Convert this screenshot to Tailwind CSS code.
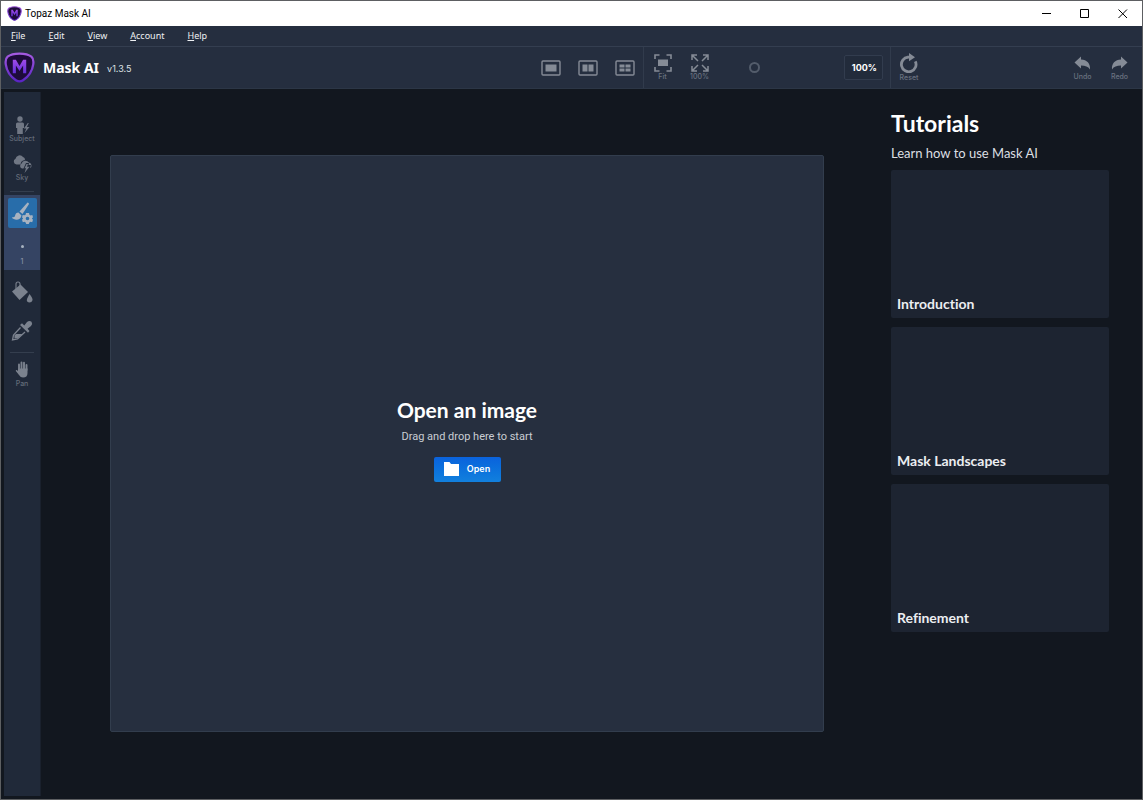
<!DOCTYPE html>
<html lang="en">
<head>
<meta charset="utf-8">
<meta name="viewport" content="width=device-width, initial-scale=1">
<title>Topaz Mask AI</title>
<script src="https://cdn.jsdelivr.net/npm/@tailwindcss/browser@4"></script>
</head>
<body class="flex h-screen flex-col overflow-hidden border border-[#5d5f62] bg-[#12171f] font-['Lato','Liberation_Sans',sans-serif] text-white">
<svg class="absolute size-0" aria-hidden="true">
  <defs>
    <linearGradient id="rim" x1="0" y1="0" x2="0" y2="1"><stop offset="0" stop-color="#a45ae0"/><stop offset="1" stop-color="#5a24c4"/></linearGradient>
    <linearGradient id="letter" x1="0" y1="0" x2="0" y2="1"><stop offset="0" stop-color="#a04be8"/><stop offset="1" stop-color="#6430d8"/></linearGradient>
  </defs>
  <symbol id="logo" viewBox="0 0 30 30">
    <path d="M15 1.500C20 1.500 24 2.500 26.500 4.500C28.500 6.200 28.700 9 28.300 12C27.400 18.500 23.500 24 18.500 27.300C16 29 14 29 11.500 27.300C6.500 24 2.600 18.500 1.700 12C1.300 9 1.500 6.200 3.500 4.500C6 2.500 10 1.500 15 1.500Z" fill="#1d0b3a" stroke="url(#rim)" stroke-width="2.200"/>
    <path d="M8.500 20.500V7.500H11.500L15 13.500L18.500 7.500H21.500V20.500H18.500V13L15 18.500L11.500 13V20.500Z" fill="url(#letter)"/>
  </symbol>
</svg>

<header>
  <div class="flex h-[25px] items-center bg-white pl-[6px] text-black">
    <svg class="mr-[3px] size-[15px]"><use href="#logo"/></svg>
    <h1 class="flex-1 font-['Roboto',sans-serif] text-[10px]">Topaz Mask AI</h1>
    <button class="flex h-full w-[38px] items-center justify-center" aria-label="Minimize"><svg class="size-[10px]" viewBox="0 0 10 10" stroke="currentColor"><path d="M0 4.500H9"/></svg></button>
    <button class="flex h-full w-[38px] items-center justify-center" aria-label="Maximize"><svg class="size-[10px]" viewBox="0 0 10 10" fill="none" stroke="currentColor"><path d="M.5 .5H8.500V8.500H.5Z"/></svg></button>
    <button class="flex h-full w-[38px] items-center justify-center" aria-label="Close"><svg class="size-[10px]" viewBox="0 0 10 10" stroke="currentColor"><path d="M.5 .5L9 9M9 .5L.5 9"/></svg></button>
  </div>
  <nav class="flex h-[21px] items-center gap-[23px] border-b border-[#343e50] bg-[#252e3f] pl-[10px] font-['Noto_Sans',sans-serif] text-[9px] text-[#eef0f3]">
    <button><u>F</u>ile</button>
    <button><u>E</u>dit</button>
    <button><u>V</u>iew</button>
    <button><u>A</u>ccount</button>
    <button><u>H</u>elp</button>
  </nav>
  <div class="flex h-[42px] border-b border-[#2c3646] bg-[#252e3f] font-['Inter',sans-serif] text-[#858b96]">
    <div class="flex flex-1 items-center pl-[3px]">
      <svg class="size-[31px]"><use href="#logo"/></svg>
      <h2 class="ml-2 font-['Noto_Sans',sans-serif] text-[14px] font-bold text-white">Mask AI</h2>
      <span class="ml-2 pt-[2px] text-[9px] text-[#dfe2e6]">v1.3.5</span>
    </div>
    <div class="flex items-center gap-[17px] pr-2">
      <button aria-label="Single view"><svg class="h-4 w-5" viewBox="0 0 20 16"><rect x="1" y="1" width="18" height="14" rx="1" fill="none" stroke="currentColor" stroke-width="1.400"/><path d="M4.500 4.500H15.500V11.500H4.500Z" fill="currentColor"/></svg></button>
      <button aria-label="Split view"><svg class="h-4 w-5" viewBox="0 0 20 16"><rect x="1" y="1" width="18" height="14" rx="1" fill="none" stroke="currentColor" stroke-width="1.400"/><path d="M4.500 4.500H9.500V11.500H4.500ZM10.500 4.500H15.500V11.500H10.500Z" fill="currentColor"/></svg></button>
      <button aria-label="Quad view"><svg class="h-4 w-5" viewBox="0 0 20 16"><rect x="1" y="1" width="18" height="14" rx="1" fill="none" stroke="currentColor" stroke-width="1.400"/><path d="M4.500 4.500H9.500V7.500H4.500ZM10.500 4.500H15.500V7.500H10.500ZM4.500 8.500H9.500V11.500H4.500ZM10.500 8.500H15.500V11.500H10.500Z" fill="currentColor"/></svg></button>
    </div>
    <div class="flex w-[248px] items-center border-x border-[#313b4c]">
      <button class="flex w-[37px] flex-col items-center text-[7px] leading-[9px] font-medium text-[#6a7280]"><svg class="size-[18px] text-[#858b96]" viewBox="0 0 18 18" fill="none" stroke="currentColor" stroke-width="1.600"><path d="M1 5V1H5.500M12.500 1H17V5M17 13V17H12.500M5.500 17H1V13"/><path d="M4 5.500H14V12H4Z" fill="currentColor" stroke="none"/></svg>Fit</button>
      <button class="flex w-[37px] flex-col items-center text-[7px] leading-[9px] font-medium text-[#6a7280]"><svg class="size-[18px] text-[#858b96]" viewBox="0 0 18 18" fill="none" stroke="currentColor" stroke-width="1.500"><path d="M1 6V1H6M1 1L7 7M12 1H17V6M17 1L11 7M17 12V17H12M17 17L11 11M6 17H1V12M1 17L7 11"/></svg>100%</button>
      <input type="range" min="0" max="100" value="0" aria-label="Zoom" class="mr-1 ml-[31px] h-3 min-w-0 flex-1 appearance-none bg-transparent [&::-webkit-slider-thumb]:size-[11px] [&::-webkit-slider-thumb]:appearance-none [&::-webkit-slider-thumb]:rounded-full [&::-webkit-slider-thumb]:border-2 [&::-webkit-slider-thumb]:border-solid [&::-webkit-slider-thumb]:border-[#535c6b] [&::-webkit-slider-thumb]:bg-transparent">
      <input type="text" value="100%" aria-label="Zoom level" class="mr-[7px] h-[25px] w-[39px] rounded-xs border border-[#323c4e] bg-[#222b3b] pr-[5px] text-right text-[9px] font-bold text-white">
    </div>
    <div class="flex w-[251px] items-center justify-between">
      <button class="flex w-9 flex-col items-center text-[7px] leading-[9px] font-medium text-[#6a7280]"><svg class="size-5 text-[#858b96]" viewBox="0 0 20 20"><path d="M16.300 8.300A7.300 7.300 0 1 1 9 4.200" fill="none" stroke="currentColor" stroke-width="2.800"/><path d="M8.500 2.800H10V0L16 4.200L10 8.300V5.600H8.500Z" fill="currentColor"/></svg>Reset</button>
      <div class="flex pr-[4px]">
        <button class="flex w-[37px] flex-col items-center gap-[2px] pt-[2px] text-[7px] leading-[9px] font-medium text-[#6a7280]"><svg class="h-[14px] w-[17px] text-[#858b96]" viewBox="0 0 17 14" fill="currentColor"><path d="M7 .5V3.500C13 3.700 16.500 7.500 16 13.500C14 10.500 11.500 9.500 7 9.500V12.500L.5 6.500Z"/></svg>Undo</button>
        <button class="flex w-[37px] flex-col items-center gap-[2px] pt-[2px] text-[7px] leading-[9px] font-medium text-[#6a7280]"><svg class="h-[14px] w-[17px] text-[#858b96]" viewBox="0 0 17 14" fill="currentColor"><path d="M10 .5V3.500C4 3.700 .5 7.500 1 13.500C3 10.500 5.500 9.500 10 9.500V12.500L16.500 6.500Z"/></svg>Redo</button>
      </div>
    </div>
  </div>
</header>

<div class="flex min-h-0 flex-1">
  <aside class="my-[3px] ml-[3px] flex w-[37px] shrink-0 flex-col items-center border-r border-[#1a212d] bg-[#202939] font-['Inter',sans-serif] text-[7px] leading-[9px] font-medium text-[#646c7a]">
    <button class="mt-6 flex flex-col items-center"><svg class="size-[18px] text-[#707784]" viewBox="0 0 18 18" fill="currentColor"><circle cx="7" cy="3" r="2.700"/><path d="M3 8Q3 6.500 4.500 6.500H9.500Q11 6.500 11 8V12H9.800V18H4.200V12H3Z"/><path d="M14.800 7L10.800 12.500H13.300L11.500 17L16.500 11H13.800L15.800 7Z"/></svg>Subject</button>
    <button class="mt-[11px] flex flex-col items-center"><svg class="size-[19px] text-[#707784]" viewBox="0 0 19 19" fill="currentColor"><path d="M3.500 10.500A3 3 0 0 1 2.500 4.800A4.200 4.200 0 0 1 10 3A3 3 0 0 1 12 6A5 5 0 0 0 7.500 10.500Z"/><path d="M9 14.500A2.700 2.700 0 0 1 8.600 9.500A4 4 0 0 1 15.800 8.600A3 3 0 0 1 17 14.200L18 11H15.500L16 9H13L10.500 14.500Z"/><path d="M13.500 10H15L14 12.700H16.500L11.500 19L13 14.200H11.500Z"/></svg>Sky</button>
    <hr class="mt-[9px] w-6 border-[#343e4e]">
    <div class="mt-[3px] flex h-[75px] w-full flex-col items-center bg-[#354463] pt-[3px] text-[#8791a4]">
      <button class="flex h-[30px] w-[29px] items-center justify-center rounded-xs bg-[#286daa] text-[#a7b2c0]" aria-label="Refine brush"><svg class="size-[22px]" viewBox="0 0 22 22" fill="currentColor"><path d="M16.500 .5L8.500 9.500L11.500 12L18 2Q18 .5 16.500 .5ZM7.500 10.500C5.500 10.500 4.500 11.800 4.200 13.200C4 14.500 3 15.500 .8 15.500C3 18.500 9.500 19 10.500 13.500Z"/><path fill-rule="evenodd" d="M15 11H18L18.400 12.700L19.700 13.400L21.300 12.900L22 15.300L20.900 16.500L22 17.800L21.200 20.200L19.600 19.800L18.300 20.600L17.800 22H15.200L14.700 20.600L13.400 19.800L11.800 20.200L11 17.800L12.100 16.500L11 15.300L11.700 12.900L13.400 13.300L14.600 12.700ZM16.500 14.700A1.800 1.800 0 1 0 16.500 18.300A1.800 1.800 0 1 0 16.500 14.700Z"/></svg></button>
      <label class="flex flex-col items-center" for="brush"><span class="mt-[17px] mb-[9px] size-[3px] rounded-full bg-[#a7b2c0]"></span></label>
      <input id="brush" type="text" value="1" aria-label="Brush size" class="w-6 bg-transparent text-center">
    </div>
    <button class="mt-[11px]" aria-label="Fill"><svg class="size-[22px] text-[#7b828e]" viewBox="0 0 22 22"><path d="M1 10.500L9.500 3.500L17 11L8.500 19Z" fill="currentColor"/><path d="M5 8V3Q5 1 7 1T9 3V8" fill="none" stroke="currentColor" stroke-width="1.100"/><path d="M18.500 13Q22 17.500 21.500 19.200Q20.800 21.500 18.500 21.500Q15.800 21.300 15.800 19Q16 17.500 18.500 13Z" fill="currentColor"/></svg></button>
    <button class="mt-[17px]" aria-label="Color picker"><svg class="size-[22px] text-[#7b828e]" viewBox="0 0 22 22"><path d="M9.500 7.500L2.500 15L1.500 20L6.500 19L14 12" fill="none" stroke="currentColor" stroke-width="1.300"/><path d="M5 14H12L6.500 18.200H3.500V15.500Z" fill="currentColor"/><path d="M9 5L11 3.300L13.300 5.500L16 2Q18.500 0 20.500 1.800Q22 4 20 6L16.500 8.700L18.500 11L17 12.800Z" fill="currentColor"/></svg></button>
    <hr class="mt-[10px] w-6 border-[#343e4e]">
    <button class="mt-2 flex flex-col items-center"><svg class="h-[18px] w-[15px] text-[#7b828e]" viewBox="0 0 15 18"><path d="M4 9V3.500M6.500 9V1.500M9 9V1.800M11.500 9V4" stroke="currentColor" stroke-width="1.900" stroke-linecap="round"/><path d="M3 7.500H12.500V12Q12.500 16.500 8 16.500Q5.500 16.500 4 14L.8 10Q.6 8.800 1.800 9L3 10Z" fill="currentColor"/></svg>Pan</button>
  </aside>

  <main class="mt-[66px] mr-[67px] mb-[67px] ml-[69px] flex flex-1 flex-col items-center justify-center rounded-xs border border-[#323d4d] bg-[#262f3f] pb-[10px]">
    <h2 class="text-[21px] leading-7 font-bold">Open an image</h2>
    <p class="mt-[5px] font-['Roboto',sans-serif] text-[11px] leading-4 text-[#c9cdd3]">Drag and drop here to start</p>
    <button class="mt-3 flex h-[25px] w-[67px] items-center justify-center gap-2 rounded-xs bg-linear-to-b from-[#0b62dc] to-[#1280dd] font-['Inter',sans-serif] text-[9px] font-semibold"><svg class="h-[14px] w-[15px]" viewBox="0 0 15 14" fill="currentColor"><path d="M0 0H5.500L7 2H15V14H0Z"/></svg>Open</button>
  </main>

  <aside class="mr-[33px] w-[218px] shrink-0 pt-5">
    <h2 class="text-[23px] leading-7 font-bold">Tutorials</h2>
    <p class="mt-[6px] text-[13px] leading-5 text-[#dcdfe3]">Learn how to use Mask AI</p>
    <div class="mt-[7px] flex flex-col gap-[9px] text-[14px] leading-4 font-bold text-[#eceef1] [font-variant-ligatures:none]">
      <a href="#introduction" class="flex h-[148px] items-end rounded-xs bg-[#1d2431] px-[6px] pb-[6px]">Introduction</a>
      <a href="#landscapes" class="flex h-[148px] items-end rounded-xs bg-[#1d2431] px-[6px] pb-[6px]">Mask Landscapes</a>
      <a href="#refinement" class="flex h-[148px] items-end rounded-xs bg-[#1d2431] px-[6px] pb-[6px]">Refinement</a>
    </div>
  </aside>
</div>
</body>
</html>
